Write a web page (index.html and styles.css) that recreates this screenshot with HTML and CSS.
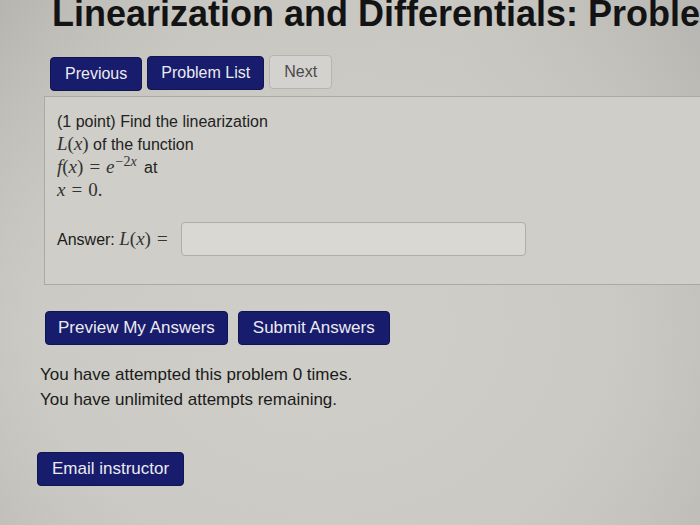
FILE: index.html
```html
<!DOCTYPE html>
<html>
<head>
<meta charset="utf-8">
<link rel="stylesheet" href="styles.css">
</head>
<body>
<div class="page">
  <h1 class="title">Linearization and Differentials: Problem 1</h1>
  <div class="nav">
    <button class="btn btn-primary">Previous</button>
    <button class="btn btn-primary btn-list">Problem List</button>
    <button class="btn btn-light">Next</button>
  </div>
  <div class="problem">
    <div class="ptext">
      <div>(1 point) Find the linearization</div>
      <div><span class="m">L</span><span class="mr">(</span><span class="m">x</span><span class="mr">)</span> of the function</div>
      <div><span class="m">f</span><span class="mr">(</span><span class="m">x</span><span class="mr">)</span><span class="mr eq">=</span><span class="m">e</span><sup class="sup"><span class="mr">−2</span><span class="m">x</span></sup> at</div>
      <div><span class="m">x</span><span class="mr eq">=</span><span class="mr">0.</span></div>
    </div>
    <div class="answer">
      <span class="alabel">Answer: <span class="m">L</span><span class="mr">(</span><span class="m">x</span><span class="mr">)</span><span class="mr eq">=</span></span>
      <input class="ainput" type="text">
    </div>
  </div>
  <div class="actions">
    <button class="btn btn-primary btn-big btn-preview">Preview My Answers</button>
    <button class="btn btn-primary btn-big">Submit Answers</button>
  </div>
  <div class="attempts">
    <div>You have attempted this problem 0 times.</div>
    <div>You have unlimited attempts remaining.</div>
  </div>
  <div class="email">
    <button class="btn btn-primary btn-big">Email instructor</button>
  </div>
</div>
</body>
</html>
```
FILE: styles.css
```css
html, body {
  margin: 0;
  padding: 0;
  height: 100%;
  overflow: hidden;
}
body {
  background:
    radial-gradient(ellipse 560px 440px at 320px 330px, #cfcec8 0%, #cbcac4 50%, rgba(190,189,184,0) 100%),
    linear-gradient(90deg, #b4b2ae 0%, #c4c3be 30%, #c6c5c0 65%, #b6b5b1 100%);
  font-family: "Liberation Sans", Arial, sans-serif;
  color: #1b1b1b;
}
.page {
  width: 700px;
  height: 525px;
  overflow: hidden;
}
.title {
  margin: -4px 0 0 52px;
  font-size: 36px;
  line-height: 35px;
  font-weight: bold;
  white-space: nowrap;
  color: #131313;
}
.nav {
  display: flex;
  gap: 5px;
  margin: 26px 0 0 50px;
  align-items: flex-start;
}
.btn {
  font-family: "Liberation Sans", Arial, sans-serif;
  font-size: 16px;
  border-radius: 4px;
  height: 34px;
  padding: 0 14px;
  cursor: pointer;
}
.btn-primary {
  background: #171c6c;
  color: #ecebf0;
  border: 1px solid #10144f;
}
.btn-list {
  margin-top: -1px;
  padding: 0 13px;
}
.btn-light {
  background: #d3d2ce;
  color: #4a4a4a;
  border: 1px solid #b5b4b0;
  margin-top: -2px;
  padding: 0 14px;
}
.problem {
  margin: 5px 0 0 44px;
  width: 680px;
  background: #cfcec8;
  border: 1px solid #aaa9a4;
  padding: 13px 0 28px 12px;
}
.ptext {
  font-size: 16px;
  line-height: 23px;
  color: #222;
}
.ptext > div {
  height: 23px;
}
.m {
  font-family: "Liberation Serif", "Times New Roman", serif;
  font-style: italic;
  font-size: 19px;
  line-height: 1;
  color: #333;
}
.mr {
  font-family: "Liberation Serif", "Times New Roman", serif;
  font-size: 19px;
  line-height: 1;
  color: #333;
}
.eq {
  margin: 0 6px;
}
.sup {
  vertical-align: 0;
  position: relative;
  top: -7px;
  line-height: 0;
  margin-left: 1px;
  margin-right: 3px;
}
.sup .m, .sup .mr {
  font-size: 14px;
}
.answer {
  display: flex;
  align-items: center;
  margin-top: 20px;
}
.alabel {
  font-size: 16px;
  line-height: 20px;
  width: 124px;
}
.ainput {
  width: 345px;
  height: 34px;
  box-sizing: border-box;
  border: 1px solid #aeada9;
  border-radius: 4px;
  background: #d9d8d3;
}
.actions {
  display: flex;
  gap: 10px;
  margin: 26px 0 0 45px;
}
.btn-big {
  font-size: 17px;
  padding: 0 14px;
}
.btn-preview {
  padding: 0 12px;
}
.attempts {
  margin: 17px 0 0 40px;
  font-size: 17px;
  line-height: 25px;
  color: #1a1a1a;
}
.email {
  margin: 40px 0 0 37px;
}
```
